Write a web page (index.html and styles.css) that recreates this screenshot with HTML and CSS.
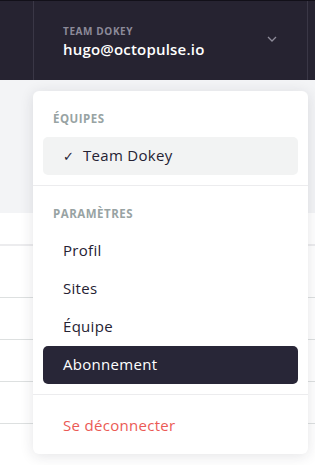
FILE: index.html
```html
<!DOCTYPE html>
<html lang="fr">

<head>
    <meta charset="UTF-8">
    <meta name="viewport" content="width=device-width, initial-scale=1.0">
    <title>Compte</title>
    <link rel="stylesheet" href="styles.css">
</head>

<body>
    <header class="topbar">
        <div class="topbar-left"></div>
        <div class="account">
            <div class="account-info">
                <span class="account-team">TEAM DOKEY</span>
                <span class="account-email">hugo@octopulse.io</span>
            </div>
            <svg class="chevron" width="10" height="6" viewBox="0 0 10 6">
                <path d="M1 1l4 4 4-4" fill="none" stroke="#8e8c9a" stroke-width="1.3" />
            </svg>
        </div>
        <div class="topbar-right"></div>
    </header>

    <main class="page">
        <div class="page-head"></div>
        <div class="table">
            <div class="table-head"></div>
            <div class="table-row"></div>
            <div class="table-row"></div>
            <div class="table-row"></div>
            <div class="table-row"></div>
            <div class="table-row"></div>
        </div>

        <nav class="dropdown">
            <div class="dropdown-section">
                <h2 class="dropdown-title">ÉQUIPES</h2>
                <a href="#" class="dropdown-item is-current"><span class="check">✓</span>Team Dokey</a>
            </div>
            <div class="dropdown-section">
                <h2 class="dropdown-title">PARAMÈTRES</h2>
                <a href="#" class="dropdown-item">Profil</a>
                <a href="#" class="dropdown-item">Sites</a>
                <a href="#" class="dropdown-item">Équipe</a>
                <a href="#" class="dropdown-item is-active">Abonnement</a>
            </div>
            <div class="dropdown-section">
                <a href="#" class="dropdown-item logout">Se déconnecter</a>
            </div>
        </nav>
    </main>
</body>

</html>
```

FILE: styles.css
```css
body {
    font-family: "Open Sans", "Noto Sans", sans-serif;
    margin: 0;
    padding: 0;
    background-color: #f3f4f6;
    height: 465px;
    overflow: hidden;
}

.topbar {
    display: flex;
    height: 80px;
    background-color: #262331;
    border-top: 1px solid #121019;
    box-sizing: border-box;
}

.topbar-left {
    width: 33px;
    border-right: 1px solid #3a3746;
}

.account {
    flex: 1;
    display: flex;
    align-items: center;
    padding: 0 30px 0 29px;
}

.account-info {
    flex: 1;
    display: flex;
    flex-direction: column;
    padding-top: 1px;
}

.account-team {
    font-size: 10px;
    font-weight: 700;
    color: #8c8a99;
    letter-spacing: 0.6px;
}

.account-email {
    font-size: 15px;
    font-weight: 600;
    color: #ffffff;
    margin-top: 1px;
    letter-spacing: 0.2px;
}

.chevron {
    margin-top: -3px;
}

.topbar-right {
    width: 7px;
    border-left: 1px solid #3a3746;
}

.page {
    position: relative;
    height: 385px;
}

.page-head {
    height: 133px;
    background-color: #f3f4f6;
}

.table {
    background-color: #ffffff;
}

.table-head {
    height: 31px;
    border-bottom: 2px solid #ececee;
}

.table-row {
    height: 41px;
    border-bottom: 1px solid #dde0e0;
}

.table-head + .table-row {
    height: 51px;
}

.dropdown {
    position: absolute;
    top: 11px;
    left: 33px;
    width: 275px;
    background-color: #ffffff;
    border-radius: 6px;
    box-shadow: 0 2px 14px rgba(30, 30, 50, 0.12);
}

.dropdown-section {
    padding: 17px 10px 10px;
    border-bottom: 1px solid #ececee;
}

.dropdown-section:last-child {
    border-bottom: none;
    padding: 12px 10px 9px;
}

.dropdown-title {
    margin: 3px 10px 11px;
    font-size: 11.5px;
    font-weight: 700;
    color: #98a3a3;
    letter-spacing: 0.5px;
}

.dropdown-item {
    display: block;
    height: 38px;
    line-height: 37px;
    padding: 0 20px;
    border-radius: 5px;
    font-size: 15px;
    font-weight: 500;
    color: #252233;
    letter-spacing: 0.3px;
    text-decoration: none;
}

.dropdown-item.is-current {
    background-color: #f2f3f3;
}

.check {
    display: inline-block;
    width: 20px;
    font-size: 13px;
}

.dropdown-item.is-active {
    background-color: #282637;
    color: #ffffff;
}

.logout {
    color: #eb5a55;
}
```
